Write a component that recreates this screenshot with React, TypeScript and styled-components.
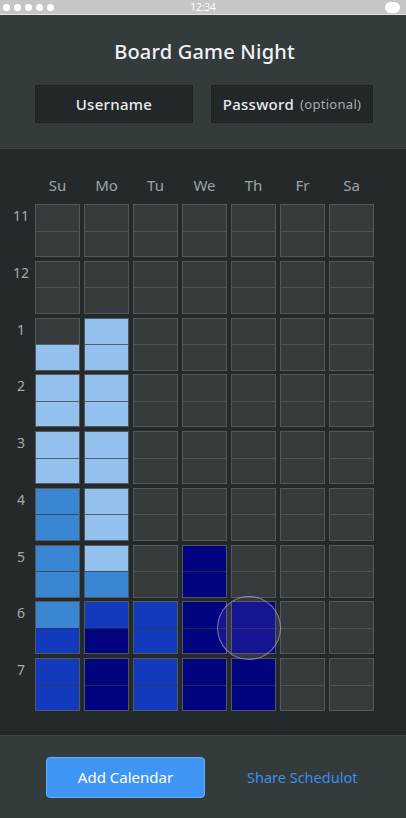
import styled, { createGlobalStyle } from "styled-components";

const GlobalStyle = createGlobalStyle`
  html, body {
    margin: 0;
    padding: 0;
    background: #242a2c;
    font-family: "Noto Sans", "Open Sans", sans-serif;
  }
`

type Fill = 0 | 1 | 2 | 3 | 4

const fills: Record<Fill, string> = {
  0: "#363c3d",
  1: "#93c0ec",
  2: "#3a86d3",
  3: "#1339bd",
  4: "#02037f",
}

const days = ["Su", "Mo", "Tu", "We", "Th", "Fr", "Sa"]
const hours = ["11", "12", "1", "2", "3", "4", "5", "6", "7"]

// each hour: per day [top half, bottom half]
const schedule: Fill[][][] = [
  [[0, 0], [0, 0], [0, 0], [0, 0], [0, 0], [0, 0], [0, 0]],
  [[0, 0], [0, 0], [0, 0], [0, 0], [0, 0], [0, 0], [0, 0]],
  [[0, 1], [1, 1], [0, 0], [0, 0], [0, 0], [0, 0], [0, 0]],
  [[1, 1], [1, 1], [0, 0], [0, 0], [0, 0], [0, 0], [0, 0]],
  [[1, 1], [1, 1], [0, 0], [0, 0], [0, 0], [0, 0], [0, 0]],
  [[2, 2], [1, 1], [0, 0], [0, 0], [0, 0], [0, 0], [0, 0]],
  [[2, 2], [1, 2], [0, 0], [4, 4], [0, 0], [0, 0], [0, 0]],
  [[2, 3], [3, 4], [3, 3], [4, 4], [4, 4], [0, 0], [0, 0]],
  [[3, 3], [4, 4], [3, 3], [4, 4], [4, 4], [0, 0], [0, 0]],
]

const Screen = styled.div`
  width: 406px;
  height: 818px;
  display: flex;
  flex-direction: column;
  background: #242a2c;
  overflow: hidden;
`

const StatusBar = styled.div`
  height: 14px;
  background: #c5c6c5;
  border-bottom: 1px solid #e2e4e3;
  display: flex;
  align-items: center;
  justify-content: space-between;
  padding: 0 6px 0 3px;
  position: relative;
`

const Dots = styled.div`
  display: flex;
  gap: 4px;
`

const Dot = styled.span`
  width: 7px;
  height: 7px;
  border-radius: 50%;
  background: #ffffff;
`

const Clock = styled.span`
  position: absolute;
  left: 0;
  right: 0;
  text-align: center;
  font-size: 10px;
  color: #ffffff;
  line-height: 14px;
`

const Battery = styled.span`
  width: 15px;
  height: 11px;
  border-radius: 6px;
  background: #ffffff;
`

const Header = styled.div`
  background: #333b3d;
  border-bottom: 1px solid #3d4547;
  padding: 25px 0 25px;
  display: flex;
  flex-direction: column;
  align-items: center;
  gap: 21px;
`

const Title = styled.h1`
  margin: 0 0 0 3px;
  font-size: 20px;
  line-height: 24px;
  font-weight: 500;
  color: #f1f3f3;
  letter-spacing: 0.2px;
`

const Fields = styled.div`
  align-self: stretch;
  display: flex;
  gap: 18px;
  padding-left: 35px;
`

const Field = styled.div<{ $width: number }>`
  width: ${p => p.$width}px;
  height: 38px;
  box-sizing: border-box;
  background: #222829;
  border: 1px solid #1d2223;
  display: flex;
  align-items: center;
  justify-content: center;
  font-size: 15px;
  font-weight: 500;
  color: #e9eced;
  letter-spacing: 0.3px;
`

const Hint = styled.span`
  margin-left: 6px;
  font-size: 13px;
  font-weight: 400;
  color: #a6adae;
`

const Board = styled.div`
  flex: 1;
  padding: 26px 0 0;
`

const DayRow = styled.div`
  display: grid;
  grid-template-columns: 31px repeat(7, 45px);
  column-gap: 4px;
  margin-bottom: 9px;
`

const DayLabel = styled.div`
  font-size: 15px;
  line-height: 20px;
  color: #9da4a5;
  text-align: center;
`

const Grid = styled.div`
  position: relative;
  display: grid;
  grid-template-columns: 31px repeat(7, 45px);
  grid-auto-rows: 53px;
  column-gap: 4px;
  row-gap: 3.75px;
`

const HourLabel = styled.div`
  padding-left: 11px;
  font-size: 14px;
  line-height: 24px;
  color: #a3aaab;
  text-align: center;
`

const Block = styled.div`
  display: grid;
  grid-template-rows: 1fr 1fr;
  border: 1px solid rgba(88, 94, 96, 0.9);
`

const Half = styled.div<{ $fill: Fill; $lower?: boolean }>`
  background: ${p => fills[p.$fill]};
  border-top: ${p => p.$lower ? `1px solid ${p.$fill === 0 ? "#4c5354" : "rgba(45, 55, 65, 0.7)"}` : "none"};
`

const Touch = styled.div`
  position: absolute;
  left: 217px;
  top: 392px;
  width: 64px;
  height: 64px;
  box-sizing: border-box;
  border-radius: 50%;
  border: 1.5px solid rgba(200, 200, 210, 0.55);
  background: rgba(150, 130, 255, 0.14);
`

const Footer = styled.div`
  height: 82px;
  background: #343b3d;
  border-top: 1px solid #3f4749;
  display: flex;
  align-items: center;
  padding-left: 46px;
  gap: 42px;
`

const Button = styled.button`
  width: 159px;
  height: 41px;
  border-radius: 4px;
  border: 1px solid #6aaef8;
  background: #3f95f4;
  color: #ffffff;
  font-family: inherit;
  font-size: 15px;
  cursor: pointer;
`

const LinkText = styled.span`
  font-size: 14.5px;
  color: #3c8ee4;
`

export default function App() {
  return (
    <Screen>
      <GlobalStyle />
      <StatusBar>
        <Dots>{[0, 1, 2, 3, 4].map(i => <Dot key={i} />)}</Dots>
        <Clock>12:34</Clock>
        <Battery />
      </StatusBar>
      <Header>
        <Title>Board Game Night</Title>
        <Fields>
          <Field $width={158}>Username</Field>
          <Field $width={162}>Password<Hint>(optional)</Hint></Field>
        </Fields>
      </Header>
      <Board>
        <DayRow>
          <span />
          {days.map(d => <DayLabel key={d}>{d}</DayLabel>)}
        </DayRow>
        <Grid>
          {hours.map((h, r) => [
            <HourLabel key={`l${h}`}>{h}</HourLabel>,
            ...schedule[r].map((cell, c) => (
              <Block key={`${h}-${c}`}>
                <Half $fill={cell[0]} />
                <Half $fill={cell[1]} $lower />
              </Block>
            )),
          ])}
          <Touch />
        </Grid>
      </Board>
      <Footer>
        <Button>Add Calendar</Button>
        <LinkText>Share Schedulot</LinkText>
      </Footer>
    </Screen>
  )
}
